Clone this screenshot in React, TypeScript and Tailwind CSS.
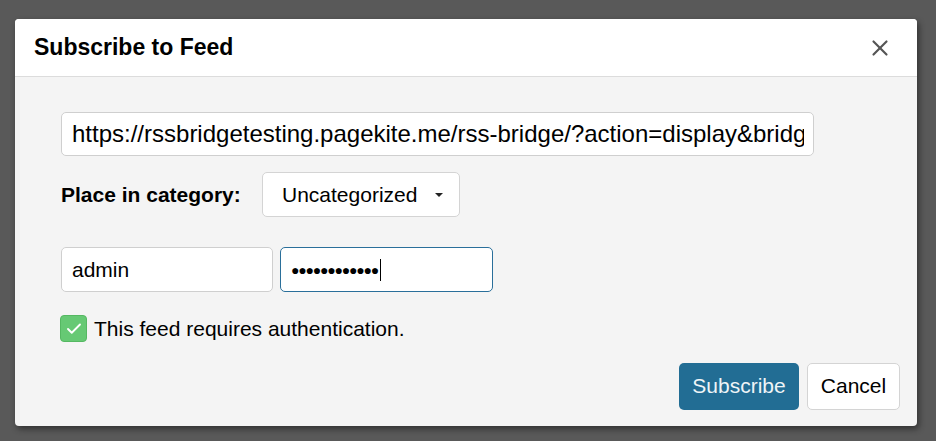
import { X, Check } from "lucide-react";

export default function App() {
  return (
    <div
      className="w-[936px] h-[441px] bg-[#595959] pt-[19px] pl-[15px]"
      style={{ fontFamily: '"Liberation Sans", Arial, sans-serif' }}
    >
      <div className="w-[902px] h-[407px] rounded-[4px] overflow-hidden bg-[#f4f4f4] shadow-[2px_3px_6px_rgba(0,0,0,0.45)] flex flex-col">
        <div className="h-[58px] bg-white border-b border-[#dcdcdc] flex items-center justify-between pl-[19px] pr-[24px] shrink-0">
          <h2 className="text-[23px] font-bold text-black">Subscribe to Feed</h2>
          <X className="w-[26px] h-[26px] text-[#555]" strokeWidth={2} />
        </div>

        <div className="flex-1 flex flex-col pl-[46px] pr-[17px] pt-[35px]">
          <input
            type="text"
            readOnly
            value="https://rssbridgetesting.pagekite.me/rss-bridge/?action=display&bridge=Twitter&context=By+username&u=admin&format=Atom"
            className="w-[753px] h-[44px] bg-white border border-[#cfcfcf] rounded-[5px] pl-[10px] pr-[9px] text-[24px] text-black outline-none"
          />

          <div className="flex items-center mt-[16px]">
            <label className="text-[21px] font-bold text-black w-[201px]">Place in category:</label>
            <div className="w-[198px] h-[45px] bg-white border border-[#d4d4d4] rounded-[5px] flex items-center pl-[19px] pr-[16px] justify-between">
              <span className="text-[21px] text-black">Uncategorized</span>
              <span className="w-0 h-0 border-l-[4px] border-r-[4px] border-t-[4px] border-l-transparent border-r-transparent border-t-[#222]" />
            </div>
          </div>

          <div className="flex gap-[7px] mt-[30px]">
            <input
              type="text"
              readOnly
              value="admin"
              className="w-[212px] h-[45px] bg-white border border-[#cfcfcf] rounded-[5px] px-[10px] text-[21px] text-black outline-none"
            />
            <div className="w-[213px] h-[45px] bg-white border border-[#2a6f9a] rounded-[5px] px-[10px] flex items-center">
              <span className="text-[14px] tracking-[-1.2px] text-black leading-none">●●●●●●●●●●●●</span>
              <span className="w-[1px] h-[22px] bg-black ml-[2px]" />
            </div>
          </div>

          <div className="flex items-center mt-[21px] ml-[-1px]">
            <div className="w-[27px] h-[27px] rounded-[4px] bg-[#66c974] border border-[#55b862] flex items-center justify-center">
              <Check className="w-[18px] h-[18px] text-white" strokeWidth={2.5} />
            </div>
            <span className="ml-[7px] text-[21px] text-black">This feed requires authentication.</span>
          </div>

          <div className="flex justify-end gap-[8px] mt-[18px]">
            <button className="w-[120px] h-[47px] rounded-[5px] bg-[#226d94] text-[#eef4f7] text-[21px]">
              Subscribe
            </button>
            <button className="w-[93px] h-[47px] rounded-[5px] bg-white border border-[#d4d4d4] text-black text-[21px]">
              Cancel
            </button>
          </div>
        </div>
      </div>
    </div>
  );
}
